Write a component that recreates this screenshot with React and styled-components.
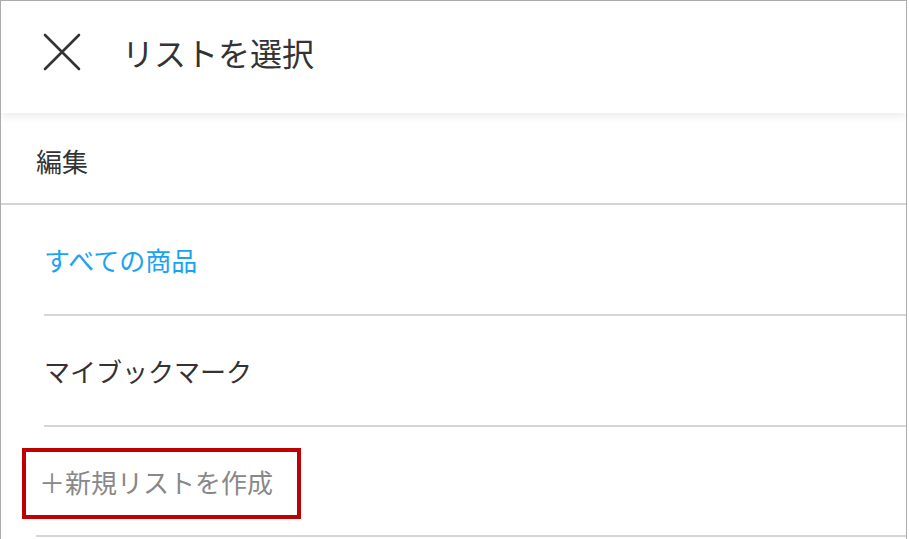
import React from 'react';
import styled, { createGlobalStyle } from 'styled-components';

const GlobalStyle = createGlobalStyle`
  html, body {
    margin: 0;
    padding: 0;
    background: #fff;
  }
  body {
    font-family: "Noto Sans CJK JP", "Noto Sans", sans-serif;
    color: #333;
  }
`;

const lists = [
  { id: 'all', label: 'すべての商品', active: true },
  { id: 'bookmark', label: 'マイブックマーク', active: false },
];

const App = () => {
  return (
    <>
      <GlobalStyle />
      <Frame>
        <Header>
          <CloseButton aria-label="閉じる">
            <svg width="38" height="38" viewBox="0 0 38 38">
              <path d="M2 2 L36 36 M36 2 L2 36" stroke="#333" strokeWidth="2.6" strokeLinecap="round" fill="none" />
            </svg>
          </CloseButton>
          <Title>リストを選択</Title>
        </Header>
        <EditRow>編集</EditRow>
        {lists.map((el) => (
          <ListItem key={el.id} $active={el.active}>
            {el.label}
          </ListItem>
        ))}
        <NewRow>
          ＋新規リストを作成
          <Highlight />
        </NewRow>
      </Frame>
    </>
  );
};

export default App;

const Frame = styled.div`
  width: 907px;
  height: 539px;
  box-sizing: border-box;
  border: 1px solid #ababab;
  border-bottom: none;
  overflow: hidden;
  background: #fff;
`;
const Header = styled.header`
  height: 112px;
  display: flex;
  align-items: center;
  padding: 0 0 10px 42px;
  box-sizing: border-box;
  position: relative;
  z-index: 1;
  background: #fff;
  box-shadow: 0 4px 8px rgba(0, 0, 0, 0.07);
`;
const CloseButton = styled.div`
  width: 38px;
  height: 38px;
  display: flex;
  margin-right: 41px;
  svg {
    display: block;
  }
`;
const Title = styled.h1`
  margin: 0;
  font-size: 32px;
  font-weight: 400;
  color: #333;
  line-height: 1;
`;
const EditRow = styled.div`
  height: 92px;
  display: flex;
  align-items: center;
  padding: 4px 0 0 35px;
  box-sizing: border-box;
  font-size: 26px;
  color: #333;
  border-bottom: 2px solid #d4d4d4;
`;
const ListItem = styled.div`
  height: 111px;
  margin-left: 43px;
  padding-left: 0;
  box-sizing: border-box;
  display: flex;
  align-items: center;
  font-size: 26px;
  color: ${({ $active }) => ($active ? '#1ba3f0' : '#333')};
  border-bottom: 2px solid #d6d6d6;
`;
const NewRow = styled.div`
  position: relative;
  height: 110px;
  margin-left: 35px;
  padding-left: 3px;
  box-sizing: border-box;
  display: flex;
  align-items: center;
  font-size: 26px;
  color: #888;
  border-bottom: 2px solid #d6d6d6;
`;
const Highlight = styled.span`
  position: absolute;
  left: -14px;
  top: 21px;
  width: 279px;
  height: 71px;
  box-sizing: border-box;
  border: 4px solid #c00000;
  pointer-events: none;
`;
